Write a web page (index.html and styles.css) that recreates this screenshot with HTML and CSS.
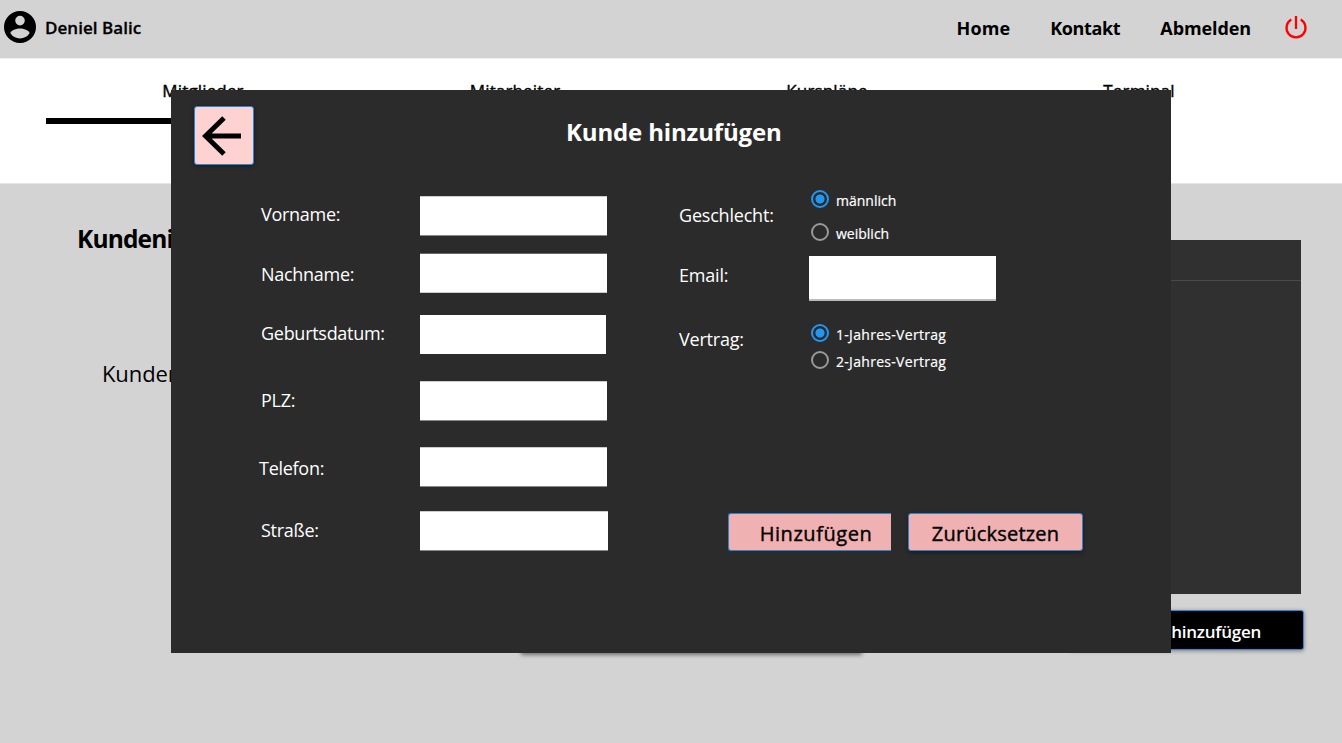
FILE: index.html
```html
<!DOCTYPE html>
<html lang="de">
<head>
<meta charset="utf-8">
<title>Kunde hinzufügen</title>
<link rel="stylesheet" href="styles.css">
</head>
<body>
<header class="topbar">
  <svg class="avatar" viewBox="2 2 20 20"><path fill-rule="evenodd" d="M12 2a10 10 0 1 0 0 20a10 10 0 0 0 0-20zm0 3a3 3 0 1 1 0 6a3 3 0 0 1 0-6zm0 14.200a7.200 7.200 0 0 1-6-3.220c.03-1.990 4-3.080 6-3.080s5.970 1.090 6 3.080a7.200 7.200 0 0 1-6 3.220z"/></svg>
  <span class="user">Deniel Balic</span>
  <nav class="links"><a class="home">Home</a><a class="kontakt">Kontakt</a><a class="abmelden">Abmelden</a></nav>
  <svg class="power" viewBox="0 0 24 24"><path d="M12 1v13M7.300 4.600a9.500 9.500 0 1 0 9.400 0"/></svg>
</header>
<nav class="tabs">
  <a class="tab active">Mitglieder</a><a class="tab">Mitarbeiter</a><a class="tab">Kurspläne</a><a class="tab">Terminal</a>
</nav>
<main class="content">
  <section class="info">
    <h1 class="heading">Kundeni</h1>
    <p class="sub">Kunden</p>
  </section>
  <section class="card"></section>
  <section class="side">
    <div class="table"><div class="thead"></div></div>
    <button class="add">hinzufügen</button>
  </section>
</main>
<div class="dialog">
  <div class="dialog-head">
    <button class="back"><svg viewBox="0 0 40 40"><path d="M39 20H4M22 2L3.500 20L22 38"/></svg></button>
    <h2 class="title">Kunde hinzufügen</h2>
  </div>
  <div class="form">
    <div class="left">
      <label class="l vorname">Vorname:</label><input class="field">
      <label class="l nachname">Nachname:</label><input class="field second">
      <label class="l geburt">Geburtsdatum:</label><input class="field date">
      <label class="l plz">PLZ:</label><input class="field">
      <label class="l telefon">Telefon:</label><input class="field">
      <label class="l strasse">Straße:</label><input class="field street">
    </div>
    <div class="right">
      <div class="grid">
        <span class="l geschlecht">Geschlecht:</span>
        <div class="radios gender">
          <div class="opt"><i class="dot on"></i><span class="t1">männlich</span></div>
          <div class="opt"><i class="dot"></i><span class="t2">weiblich</span></div>
        </div>
        <span class="l email">Email:</span><input class="field mail">
        <span class="l vertrag">Vertrag:</span>
        <div class="radios contract">
          <div class="opt"><i class="dot on"></i><span class="t3">1-Jahres-Vertrag</span></div>
          <div class="opt"><i class="dot"></i><span class="t3">2-Jahres-Vertrag</span></div>
        </div>
      </div>
      <div class="actions"><button class="btn submit">Hinzufügen</button><button class="btn reset">Zurücksetzen</button></div>
    </div>
  </div>
</div>
</body>
</html>
```
FILE: styles.css
```css
* { box-sizing: border-box; }
body { margin: 0; width: 1342px; height: 743px; overflow: hidden; position: relative; background: #d3d3d3; color: #000; font-family: "Open Sans", "Noto Sans", sans-serif; }
h1, h2, p { margin: 0; }
button { font-family: inherit; padding: 0; }
.topbar { height: 59px; display: flex; align-items: flex-start; border-bottom: 1px solid #f0f0f0; font-weight: 600; white-space: nowrap; }
.avatar { width: 32px; height: 32px; margin: 11px 9px 0 4px; }
.user { font-size: 17px; line-height: 24px; margin-top: 16px; width: 200px; letter-spacing: 0.05px; -webkit-text-stroke: 0.3px #000; }
.links { display: flex; flex: 1; justify-content: flex-end; gap: 40px; font-size: 18px; line-height: 24px; margin-top: 16px; font-weight: 700; }
.home { letter-spacing: 0.1px; }
.kontakt { letter-spacing: -0.35px; }
.abmelden { letter-spacing: -0.1px; }
.power { width: 24px; height: 24px; margin: 15px 34px 0 33px; fill: none; stroke: #f00; stroke-width: 2.3; }
.tabs { height: 124px; background: #fff; padding-left: 46px; display: grid; grid-template-columns: repeat(4, 312px); }
.tab { font-size: 17px; line-height: 24px; padding: 20px 0 0 2px; height: 65px; text-align: center; letter-spacing: 0.15px; -webkit-text-stroke: 0.4px #000; }
.active { border-bottom: 6px solid #000; }
.content { height: 560px; display: grid; grid-template-columns: 521px 341px 1fr; border-top: 1px solid #e6e6e6; }
.info { white-space: nowrap; }
.heading { font-size: 24.500px; line-height: 32px; margin: 39px 0 0 77px; letter-spacing: -0.85px; }
.sub { font-size: 22px; line-height: 30px; margin: 103px 0 0 102px; letter-spacing: -0.1px; }
.card { height: 469px; background: #d3d3d3; box-shadow: 0 2px 4px #0007; }
.side { padding: 56px 38px 0 208px; }
.table { width: 231px; height: 354px; background: #303030; }
.thead { height: 41px; border-bottom: 1px solid #4a4a4a; }
.add { display: block; width: 234px; height: 40px; margin-top: 16px; background: #000; border: 1.500px solid #2a8be6; border-radius: 3px; box-shadow: 0 1px 4px #0006; color: #fff; font-size: 17px; font-weight: 600; letter-spacing: -0.25px; text-align: right; padding: 2px 42px 0 0; }
.dialog { position: absolute; left: 171px; top: 90px; width: 1000px; height: 563px; background: #2b2b2b; color: #fff; }
.dialog-head { display: flex; height: 106px; padding: 16px 0 0 23px; }
.back { width: 60px; height: 59px; background: #ffd2d2; border: 1px solid #1f87e5; border-radius: 3px; box-shadow: 0 1px 4px #0006; padding-left: 7px; text-align: left; }
.back svg { width: 40px; height: 40px; display: block; fill: none; stroke: #000; stroke-width: 5; }
.title { font-size: 24px; line-height: 32px; margin: 10px 0 0 312px; white-space: nowrap; letter-spacing: -0.15px; }
.form { display: flex; height: 457px; }
.left { width: 508px; padding-left: 90px; display: grid; grid-template-columns: 159px 190px; grid-template-rows: 58px 61px 66px 66px 64px 40px; align-items: start; }
.l { font-size: 18px; line-height: 24px; white-space: nowrap; letter-spacing: -0.28px; }
.left .l { padding-top: 6px; }
.field { width: 187px; height: 40px; background: #fff; border: 0 solid #888; border-width: 1px 0; border-top-color: #ccc; padding: 0 6px; outline: 0; border-radius: 0; }
.second { margin-top: -1px; border-color: #666 #fff #ccc; }
.date { width: 186px; height: 39px; border: 0; }
.street { width: 188px; }
.left .telefon { padding-top: 9px; margin-left: -2px; }
.left .nachname { padding-top: 8px; }
.left .plz, .left .strasse { padding-top: 7px; }
.grid { display: grid; grid-template-columns: 130px 190px; grid-template-rows: 60px 67px 150px; align-items: start; }
.right .l { letter-spacing: -0.2px; }
.geschlecht { padding-top: 7px; }
.email { padding-top: 7px; }
.vertrag { padding-top: 4px; }
.field.mail { height: 45px; border-top: 0; border-bottom: 2px solid #bbb; }
.radios { display: grid; padding-left: 2px; font-size: 14px; line-height: 20px; white-space: nowrap; }
.gender { grid-template-rows: 33px 20px; margin-top: -6px; }
.contract { grid-template-rows: 27px 20px; margin-top: 1px; }
.opt { display: flex; align-items: flex-start; gap: 7px; }
.opt span { margin-top: 1px; -webkit-text-stroke: 0.2px #fff; }
.t3 { letter-spacing: 0.3px; }
.dot { width: 18px; height: 18px; border: 2px solid #999; border-radius: 50%; }
.on { border-color: #2196f3; background: radial-gradient(circle, #2196f3 4.200px, transparent 4.900px); }
.actions { display: flex; gap: 17px; margin: 40px 0 0 49px; }
.btn { height: 38px; background: #f0b1b3; border: 1.500px solid #2b84cf; font-size: 20px; color: #000; padding-top: 2px; -webkit-text-stroke: 0.4px #000; }
.submit { width: 163px; border-right: 0; border-radius: 3px 0 0 3px; padding-left: 12px; letter-spacing: 0.55px; }
.reset { width: 175px; border-radius: 3px; box-shadow: 0 2px 4px #0005; letter-spacing: 0.2px; }
```
